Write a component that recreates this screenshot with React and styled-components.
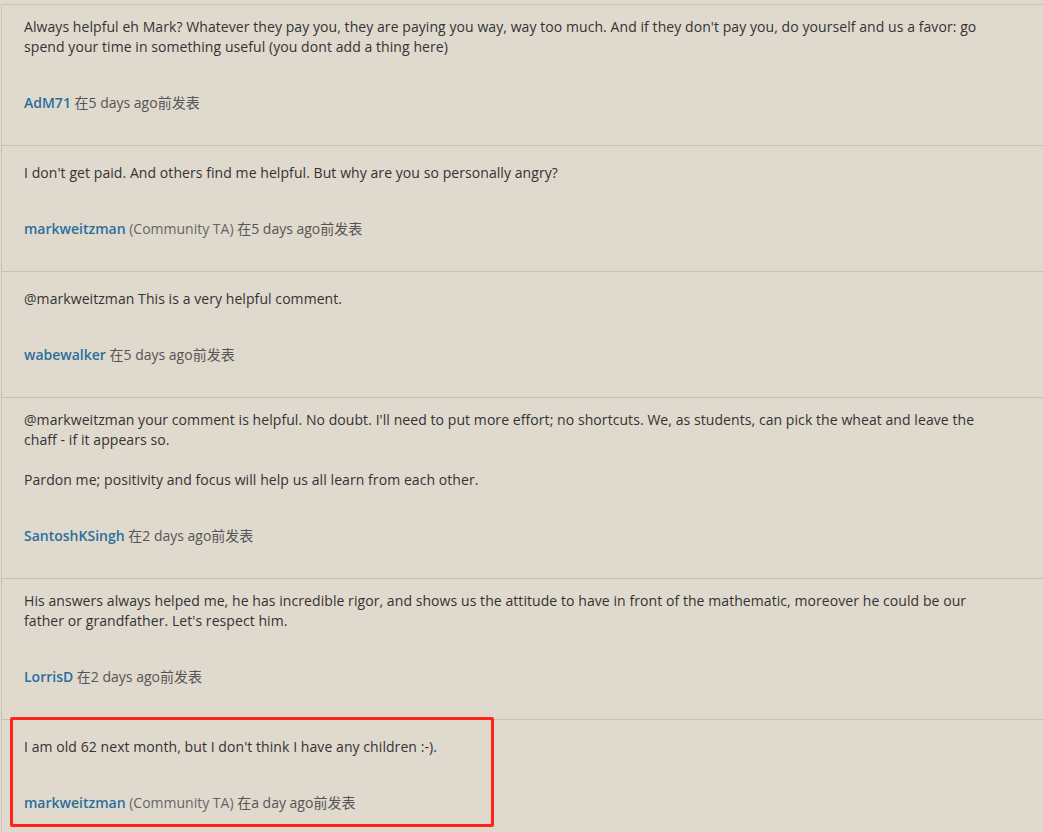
import React from 'react';
import styled, { createGlobalStyle } from 'styled-components';

const GlobalStyle = createGlobalStyle`
  html, body {
    margin: 0;
    padding: 0;
    background: #e0d9ce;
  }
  body {
    font-family: "Open Sans", "Noto Sans CJK SC", sans-serif;
    font-size: 14px;
    line-height: 20px;
    color: #333;
  }
`;

const comments = [
  {
    body: [
      "Always helpful eh Mark? Whatever they pay you, they are paying you way, way too much. And if they don't pay you, do yourself and us a favor: go spend your time in something useful (you dont add a thing here)",
    ],
    author: 'AdM71',
    when: '5 days ago',
  },
  {
    body: ["I don't get paid. And others find me helpful. But why are you so personally angry?"],
    author: 'markweitzman',
    role: 'Community TA',
    when: '5 days ago',
  },
  {
    body: ['@markweitzman This is a very helpful comment.'],
    author: 'wabewalker',
    when: '5 days ago',
  },
  {
    body: [
      "@markweitzman your comment is helpful. No doubt. I'll need to put more effort; no shortcuts. We, as students, can pick the wheat and leave the chaff - if it appears so.",
      'Pardon me; positivity and focus will help us all learn from each other.',
    ],
    author: 'SantoshKSingh',
    when: '2 days ago',
  },
  {
    body: [
      "His answers always helped me, he has incredible rigor, and shows us the attitude to have in front of the mathematic, moreover he could be our father or grandfather. Let's respect him.",
    ],
    author: 'LorrisD',
    when: '2 days ago',
  },
  {
    body: ["I am old 62 next month, but I don't think I have any children :-)."],
    author: 'markweitzman',
    role: 'Community TA',
    when: 'a day ago',
    marked: true,
  },
];

const App = () => (
  <>
    <GlobalStyle />
    <Thread>
      {comments.map((c, i) => (
        <Comment key={i}>
          <Body>
            {c.body.map((p, j) => (
              <Para key={j}>{p}</Para>
            ))}
          </Body>
          <Meta>
            <Author href="#">{c.author}</Author>
            {c.role && <Role> ({c.role})</Role>} 在{c.when}前发表
          </Meta>
          {c.marked && <Highlight />}
        </Comment>
      ))}
    </Thread>
  </>
);

export default App;

const Thread = styled.div`
  margin: 4px 0 0 1px;
  border-left: 1px solid #cbc3b8;
  min-height: 828px;
`;

const Comment = styled.div`
  position: relative;
  border-top: 1px solid #c9c1b6;
  padding: 12px 44px 32px 22px;
`;

const Body = styled.div`
  min-height: 25px;
  display: flex;
  flex-direction: column;
  justify-content: flex-end;
  letter-spacing: 0.07px;
`;

const Para = styled.p`
  margin: 0;
  & + & {
    margin-top: 20px;
  }
`;

const Meta = styled.div`
  margin-top: 36px;
  color: #555;
`;

const Author = styled.a`
  color: #2a6f9c;
  font-weight: 600;
  text-decoration: none;
`;

const Role = styled.span`
  color: #666;
`;

// annotation box drawn over the last comment
const Highlight = styled.div`
  position: absolute;
  left: 8px;
  top: -3px;
  width: 478px;
  height: 104px;
  border: 3px solid #ff2318;
  border-radius: 2px;
  pointer-events: none;
`;
